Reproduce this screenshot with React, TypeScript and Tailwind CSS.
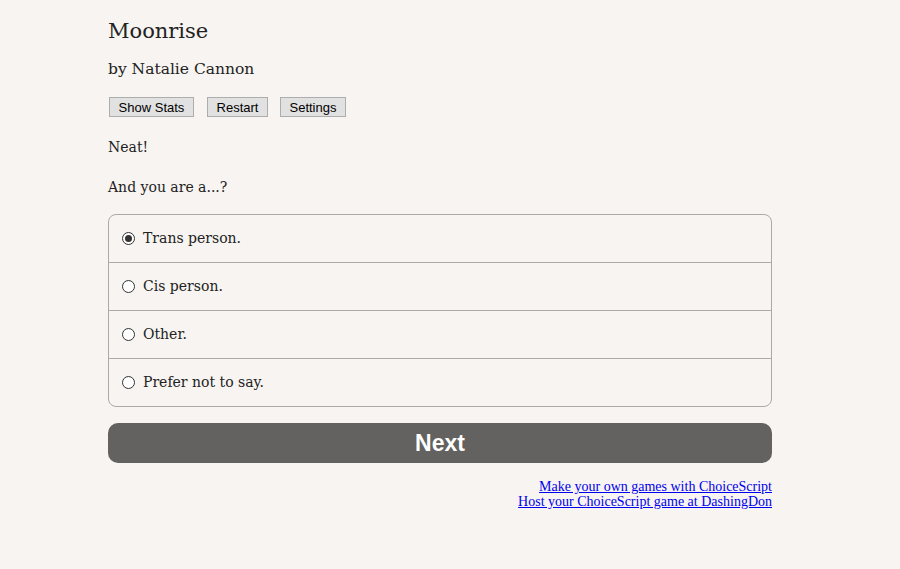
import React from "react";

const serif = { fontFamily: '"DejaVu Serif", Georgia, serif' };

export default function App() {
  const options = ["Trans person.", "Cis person.", "Other.", "Prefer not to say."];
  return (
    <div className="min-h-[569px] w-full bg-[#f7f4f1] text-[#222]" style={serif}>
      <div className="ml-[108px] w-[664px] pt-[15px]">
        <h1 className="text-[21px] leading-[32px] font-normal">Moonrise</h1>
        <h2 className="mt-[10px] text-[15.5px] leading-[24px] font-normal">by Natalie Cannon</h2>
        <div className="mt-[16px] flex pl-[1px] font-['Liberation_Sans',sans-serif] text-[13px] text-black">
          <button className="h-[20px] w-[85px] border border-[#adadad] bg-[#e1e1e1]">Show Stats</button>
          <button className="ml-[13px] h-[20px] w-[61px] border border-[#adadad] bg-[#e1e1e1]">Restart</button>
          <button className="ml-[12px] h-[20px] w-[66px] border border-[#adadad] bg-[#e1e1e1]">Settings</button>
        </div>
        <p className="mt-[20px] text-[14px] leading-[20px]">Neat!</p>
        <p className="mt-[20px] text-[14px] leading-[20px]">And you are a...?</p>
        <div className="mt-[17px] rounded-[8px] border border-[#aaa]">
          {options.map((o, i) => (
            <label
              key={o}
              className={`flex items-center pl-[13px] ${i > 0 ? "h-[48px] border-t border-[#aaa]" : "h-[47px]"}`}
            >
              <span className="relative flex h-[13px] w-[13px] items-center justify-center rounded-full border border-[#333] bg-white">
                {i === 0 && <span className="h-[7px] w-[7px] rounded-full bg-[#333]" />}
              </span>
              <span className="ml-[8px] text-[14px]">{o}</span>
            </label>
          ))}
        </div>
        <button className="mt-[16px] flex h-[40px] w-full items-center justify-center rounded-[10px] bg-[#636260] font-['Liberation_Sans',sans-serif] text-[23px] font-bold text-white">
          Next
        </button>
        <div className="mt-[16px] flex flex-col items-end font-['Liberation_Serif',serif] text-[14px] leading-[15px]">
          <a href="#" className="text-[#0000ee] underline">Make your own games with ChoiceScript</a>
          <a href="#" className="text-[#0000ee] underline">Host your ChoiceScript game at DashingDon</a>
        </div>
      </div>
    </div>
  );
}
